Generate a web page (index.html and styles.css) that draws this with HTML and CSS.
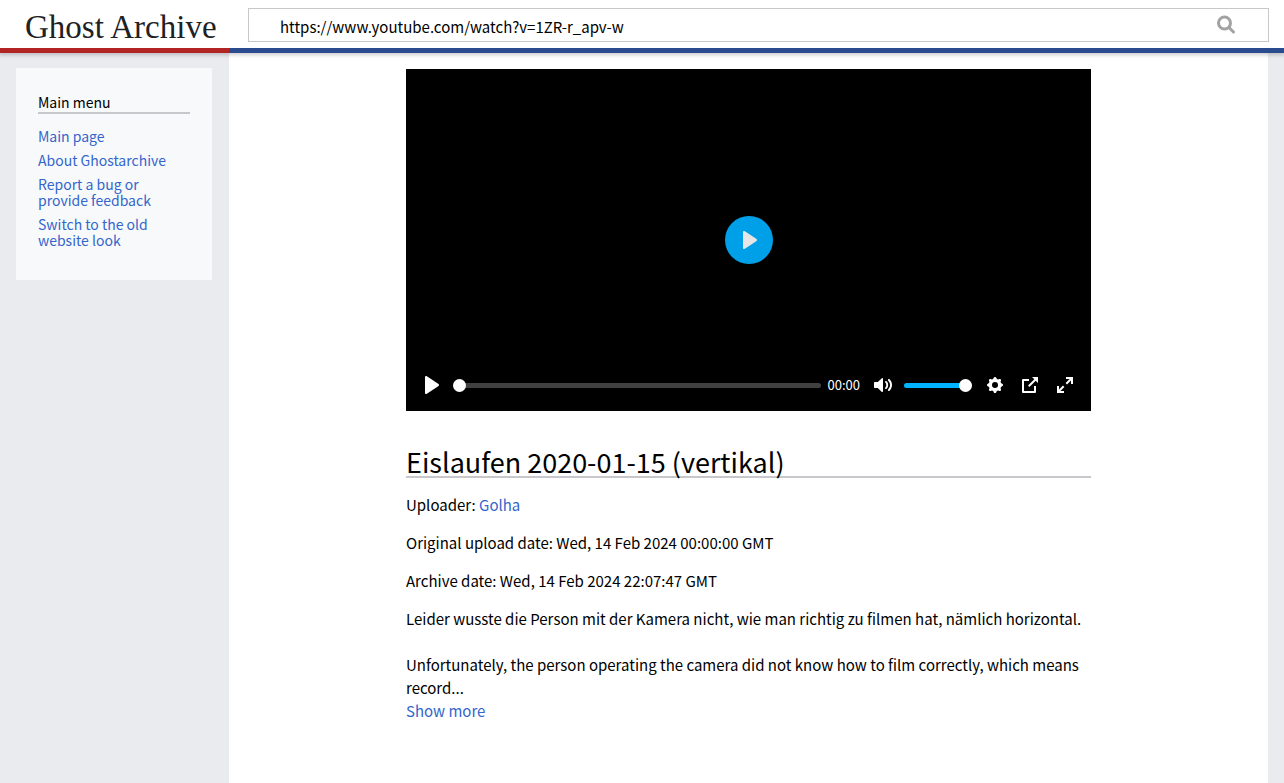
FILE: index.html
```html
<!DOCTYPE html>
<html lang="en">
<head>
<meta charset="utf-8">
<meta name="viewport" content="width=device-width, initial-scale=1">
<title>Eislaufen 2020-01-15 (vertikal) - Ghost Archive</title>
<link rel="stylesheet" href="styles.css">
</head>
<body>
<header class="header">
  <div class="brand"><a class="logo" href="#">Ghost Archive</a></div>
  <form class="search" role="search">
    <div class="search-box">
      <input class="search-input" type="text" aria-label="Search the archive" value="https://www.youtube.com/watch?v=1ZR-r_apv-w">
      <button class="search-button" type="button" aria-label="Search">
        <svg width="20" height="20" viewBox="0 0 20 20" fill="none" stroke="#a2a2a2"><circle cx="7.500" cy="8" r="6" stroke-width="3"/><path d="M12 12.500L16.500 17" stroke-width="3" stroke-linecap="round"/></svg>
      </button>
    </div>
  </form>
</header>
<div class="layout">
  <aside class="sidebar">
    <nav class="menu" aria-labelledby="menu-title">
      <h2 class="menu-title" id="menu-title">Main menu</h2>
      <ul class="menu-list">
        <li><a href="#">Main page</a></li>
        <li><a href="#">About Ghostarchive</a></li>
        <li><a href="#">Report a bug or provide feedback</a></li>
        <li><a href="#">Switch to the old website look</a></li>
      </ul>
    </nav>
  </aside>
  <main class="content">
    <article class="article">
      <section class="player" aria-label="Video player">
        <button class="big-play" type="button" aria-label="Play video">
          <svg width="18" height="18" viewBox="0 0 18 18" fill="currentColor"><path d="M15.562 8.100L3.870.225c-.818-.562-1.870 0-1.870.9v15.750c0 .9 1.052 1.462 1.870.9L15.563 9.900c.584-.45.584-1.350 0-1.800z"/></svg>
        </button>
        <div class="controls">
          <button class="control" type="button" aria-label="Play">
            <svg width="18" height="18" viewBox="0 0 18 18" fill="currentColor"><path d="M15.562 8.100L3.870.225c-.818-.562-1.870 0-1.870.9v15.750c0 .9 1.052 1.462 1.870.9L15.563 9.900c.584-.45.584-1.350 0-1.800z"/></svg>
          </button>
          <input class="range seek" type="range" min="0" max="100" value="0" aria-label="Seek">
          <span class="time">00:00</span>
          <button class="control" type="button" aria-label="Mute">
            <svg width="18" height="18" viewBox="0 0 18 18" fill="currentColor"><path d="M15.600 3.300c-.4-.4-1-.4-1.400 0s-.4 1 0 1.400C15.400 5.900 16 7.400 16 9s-.6 3.100-1.800 4.300c-.4.4-.4 1 0 1.400.2.2.5.3.7.3.3 0 .5-.1.7-.3C17.100 13.200 18 11.200 18 9s-.9-4.200-2.400-5.700z"/><path d="M11.282 5.282a.909.909 0 0 0 0 1.316c.735.735.995 1.458.995 2.402 0 .936-.425 1.917-.995 2.487a.909.909 0 0 0 0 1.316c.145.145.636.262 1.018.156a.725.725 0 0 0 .298-.156C13.773 11.733 14.130 10.160 14.130 9c0-.17-.002-.34-.011-.51-.053-.992-.319-2.005-1.522-3.208a.909.909 0 0 0-1.316 0zM3.786 6.008H.714C.286 6.008 0 6.310 0 6.760v4.512c0 .452.286.752.714.752h3.072l4.071 3.858c.5.3 1.143 0 1.143-.602V2.752c0-.601-.643-.977-1.143-.601L3.786 6.008z"/></svg>
          </button>
          <input class="range volume" type="range" min="0" max="100" value="100" aria-label="Volume">
          <div class="tools">
            <button class="control" type="button" aria-label="Settings">
              <svg width="18" height="18" viewBox="0 0 18 18" fill="currentColor"><path d="M16.135 7.784a2 2 0 0 1-1.230-2.969c.322-.536.225-.998-.094-1.316l-.31-.31c-.318-.318-.78-.415-1.316-.094a2 2 0 0 1-2.969-1.230C10.065 1.258 9.669 1 9.219 1h-.438c-.45 0-.845.258-.997.865a2 2 0 0 1-2.969 1.230c-.536-.322-.999-.225-1.317.093l-.31.31c-.318.318-.415.781-.093 1.317a2 2 0 0 1-1.230 2.969C1.260 7.935 1 8.330 1 8.781v.438c0 .45.258.845.865.997a2 2 0 0 1 1.230 2.969c-.322.536-.225.998.094 1.316l.31.31c.319.319.782.415 1.316.094a2 2 0 0 1 2.969 1.230c.151.607.547.865.997.865h.438c.45 0 .845-.258.997-.865a2 2 0 0 1 2.969-1.230c.535.321.997.225 1.316-.094l.31-.31c.318-.318.415-.781.094-1.316a2 2 0 0 1 1.230-2.969c.607-.151.865-.547.865-.997v-.438c0-.451-.26-.846-.865-.997zM9 12a3 3 0 1 1 0-6 3 3 0 0 1 0 6z"/></svg>
            </button>
            <button class="control" type="button" aria-label="Picture in picture">
              <svg width="18" height="18" viewBox="0 0 18 18" fill="currentColor"><path d="M13.293 3.293L7.022 9.564l1.414 1.414 6.271-6.271L17 7V1h-6z"/><path d="M13 15H3V5h5V3H2a1 1 0 0 0-1 1v12a1 1 0 0 0 1 1h12a1 1 0 0 0 1-1v-6h-2v5z"/></svg>
            </button>
            <button class="control" type="button" aria-label="Fullscreen">
              <svg width="18" height="18" viewBox="0 0 18 18" fill="currentColor"><path d="M10 3h3.600l-4 4L11 8.400l4-4V8h2V1h-7zM7 9.600l-4 4V10H1v7h7v-2H4.400l4-4z"/></svg>
            </button>
          </div>
        </div>
      </section>
      <h1 class="title">Eislaufen 2020-01-15 (vertikal)</h1>
      <p class="meta">Uploader: <a href="#">Golha</a></p>
      <p class="meta">Original upload date: Wed, 14 Feb 2024 00:00:00 GMT</p>
      <p class="meta">Archive date: Wed, 14 Feb 2024 22:07:47 GMT</p>
      <div class="description" lang="de">
        <p>Leider wusste die Person mit der Kamera nicht, wie man richtig zu filmen hat, nämlich horizontal.</p>
        <p lang="en">Unfortunately, the person operating the camera did not know how to film correctly, which means record...<br><a href="#">Show more</a></p>
      </div>
    </article>
  </main>
</div>
</body>
</html>
```
FILE: styles.css
```css
* { box-sizing: border-box; }

body {
  margin: 0;
  min-height: 100vh;
  display: flex;
  flex-direction: column;
  background: #fff;
  color: #000;
  font: 15px/23px "Noto Sans CJK JP", "Noto Sans", sans-serif;
}

a { color: #36c; text-decoration: none; }
a:hover { text-decoration: underline; }

button {
  display: flex;
  align-items: center;
  justify-content: center;
  padding: 0;
  border: 0;
  background: none;
  cursor: pointer;
}

.header {
  position: relative;
  display: flex;
  box-shadow: 0 1px 4px 1px rgba(0, 0, 0, .2);
}

.brand {
  flex: 0 0 229px;
  border-bottom: 5px solid #b32424;
  padding: 8px 0 0 25px;
}

.logo {
  color: #202122;
  font: 33px/38px "Liberation Serif", serif;
  white-space: nowrap;
}

.search {
  flex: 1;
  min-width: 0;
  border-bottom: 5px solid #2a4b8d;
  padding: 8px 15px 6px 19px;
}

.search-box {
  display: flex;
  height: 34px;
  border: 1px solid #c8c8c8;
  padding: 0 31px;
}

.search-input {
  flex: 1;
  min-width: 0;
  border: 0;
  outline: 0;
  padding: 3px 0 0;
  background: none;
  color: #000;
  font: inherit;
}

.layout { flex: 1; display: flex; }

.sidebar {
  flex: 0 0 229px;
  padding: 15px 17px 16px 16px;
  background: #eaebef;
}

.menu {
  padding: 24px 22px 32px;
  background: #f8f9fb;
  font-size: 14px;
  line-height: 16px;
}

.menu-title {
  margin: 0 0 14px;
  border-bottom: 2px solid #c8c8cc;
  font-size: 14px;
  font-weight: 400;
  line-height: 20px;
}

.menu-list {
  display: flex;
  flex-direction: column;
  gap: 8px;
  margin: 0;
  padding: 0;
  list-style: none;
}

.content {
  flex: 1;
  min-width: 0;
  border-right: 16px solid #eaebef;
  padding: 16px;
}

.article { max-width: 685px; margin: 0 auto; }

.player {
  aspect-ratio: 685 / 342;
  display: grid;
  grid-template: 1fr / 1fr;
  background: #000;
  color: #fff;
}

.big-play {
  grid-area: 1 / 1;
  place-self: center;
  width: 48px;
  height: 48px;
  border-radius: 50%;
  background: #00a0e9;
  color: #e6e6e6;
  padding-left: 2px;
}

.controls {
  grid-area: 1 / 1;
  align-self: end;
  display: flex;
  align-items: center;
  padding: 10px;
}

.control { flex: none; width: 32px; height: 32px; color: #fff; }

.range {
  appearance: none;
  min-width: 0;
  height: 14px;
  margin: 0 5px;
  background: none;
}
.range::-webkit-slider-runnable-track { height: 5px; border-radius: 3px; background: #404040; }
.range::-webkit-slider-thumb {
  appearance: none;
  width: 13px;
  height: 13px;
  margin-top: -4px;
  border-radius: 50%;
  background: #fff;
}
.seek { flex: 1; }
.volume { width: 68px; }
.volume::-webkit-slider-runnable-track { background: #00b3ff; }

.time { padding: 0 7px 0 2px; font-size: 13px; line-height: 20px; }

.tools { display: flex; gap: 3px; padding-left: 2px; }

.title {
  margin: 36px 0 15px;
  border-bottom: 2px solid #c8c8cc;
  font-size: 27px;
  font-weight: 400;
  line-height: 29px;
}

.meta { margin: 0 0 15px; }

.description p { margin: 0 0 23px; }
```
